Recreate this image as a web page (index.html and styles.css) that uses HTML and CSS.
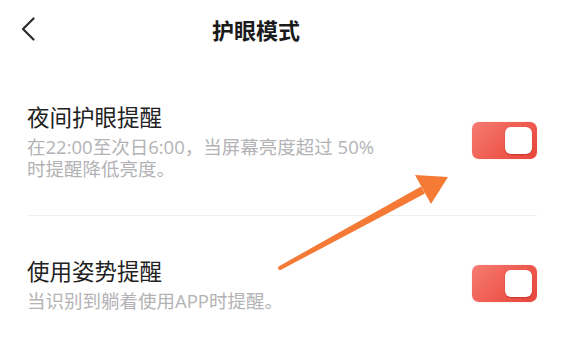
FILE: index.html
```html
<!DOCTYPE html>
<html lang="zh-CN">
<head>
<meta charset="utf-8">
<title>护眼模式</title>
<link rel="stylesheet" href="styles.css">
</head>
<body>
<div class="page">
  <header class="header">
    <svg class="back" width="14" height="24" viewBox="0 0 14 24">
      <path d="M12.5 1.5 L2 12 L12.5 22.5" fill="none" stroke="#2a2a2a" stroke-width="2.2" stroke-linecap="round" stroke-linejoin="round"/>
    </svg>
    <h1 class="title">护眼模式</h1>
  </header>
  <section class="list">
    <div class="row row-first">
      <div class="text">
        <div class="row-title">夜间护眼提醒</div>
        <div class="row-sub">在22:00至次日6:00，当屏幕亮度超过 50%<br>时提醒降低亮度。</div>
      </div>
      <div class="toggle"><span class="knob"></span></div>
    </div>
    <div class="divider"></div>
    <div class="row row-second">
      <div class="text">
        <div class="row-title">使用姿势提醒</div>
        <div class="row-sub">当识别到躺着使用APP时提醒。</div>
      </div>
      <div class="toggle"><span class="knob"></span></div>
    </div>
  </section>
  <svg class="arrow" width="577" height="350" viewBox="0 0 577 350">
    <polygon points="281,269.8 279,266.2 421,186.5 425,193.5" fill="#f47a36"/>
    <circle cx="280" cy="268" r="2" fill="#f47a36"/>
    <polygon points="415,175 448,177 431,204" fill="#f47a36"/>
  </svg>
</div>
</body>
</html>
```

FILE: styles.css
```css
* { box-sizing: border-box; }
html, body {
  margin: 0;
  padding: 0;
  background: #ffffff;
}
body {
  font-family: "Noto Sans CJK SC", "Noto Sans", sans-serif;
  color: #222222;
}
.page {
  position: relative;
  width: 577px;
  height: 350px;
  overflow: hidden;
}
.header {
  height: 58px;
  display: flex;
  align-items: center;
  padding-left: 21px;
}
.back {
  display: block;
}
.title {
  margin: 0 0 0 177px;
  font-size: 22px;
  font-weight: 700;
  line-height: 30px;
  color: #1a1a1a;
}
.list {
  padding: 0 40px 0 27px;
}
.row {
  display: flex;
  align-items: center;
  justify-content: space-between;
}
.row-first {
  padding-top: 43px;
  padding-bottom: 35px;
}
.row-second {
  padding-top: 39px;
}
.row-title {
  font-size: 22.5px;
  line-height: 30px;
  color: #222222;
}
.row-sub {
  margin-top: 5px;
  font-family: "Open Sans", "Noto Sans CJK SC", sans-serif;
  font-size: 18.5px;
  line-height: 22px;
  color: #b3b3b6;
}
.divider {
  height: 1px;
  background: #f0f0f0;
}
.toggle {
  width: 65px;
  height: 37px;
  border-radius: 7px;
  background: linear-gradient(135deg, #f57b72 0%, #ef5b50 55%, #e8463b 100%);
  display: flex;
  align-items: center;
  justify-content: flex-end;
  padding-right: 5px;
  box-shadow: 0 0 1px rgba(220, 60, 50, 0.5);
}
.knob {
  width: 27px;
  height: 27px;
  border-radius: 6px;
  background: #ffffff;
  box-shadow: 0 1px 1.5px rgba(170, 30, 20, 0.55);
}
.arrow {
  position: absolute;
  left: 0;
  top: 0;
  pointer-events: none;
}
```
